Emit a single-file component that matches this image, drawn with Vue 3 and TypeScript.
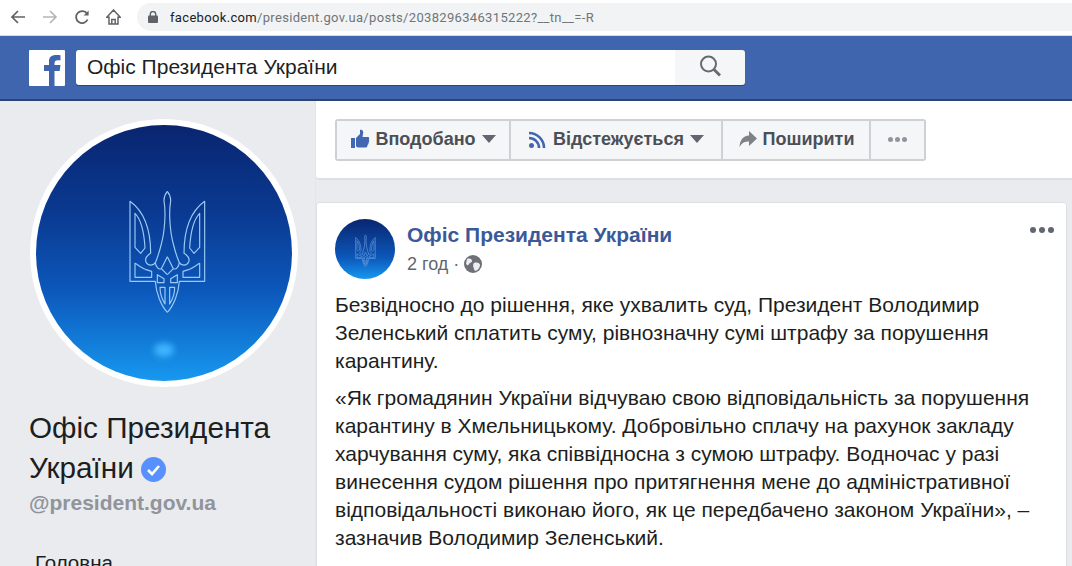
<script setup lang="ts">
const actions = [
  { label: 'Вподобано', icon: 'like', caret: true, w: 174 },
  { label: 'Відстежується', icon: 'rss', caret: true, w: 212 },
  { label: 'Поширити', icon: 'share', caret: false, w: 148 },
]
const sides = ['', 'translate(284 0) scale(-1 1)']
const tridentPaths = [
  // outer half: spear, stem, curl, wing, lower bar and half of the shield
  'M142 22C134 32 130 44 133 58C137 85 135 140 124 180C118 205 112 222 106 236C100 246 84 246 78 234C74 224 82 214 92 208C92 150 80 88 30 52V292H106C108 328 124 366 142 385',
  // blade
  'M45 88C62 105 72 140 75 192L62 208L45 190Z',
  // lower box
  'M45 238C56 244 66 252 76 256L95 262V280H45Z',
  // centre diamond
  'M142 218L124 254L142 272',
  // scroll under the diamond
  'M106 236C108 250 116 258 124 254',
  // small arch
  'M112 272L132 284V296H112Z',
  // shield cell
  'M120 310H135V360C126 346 120 328 120 310Z',
]
</script>

<template>
  <div class="page">
    <div class="chrome">
      <svg class="nav-ic" width="16" height="16" viewBox="0 0 16 16"><path d="M15 8H2M8 2 2 8l6 6" fill="none" stroke="#5f6368" stroke-width="1.7" /></svg>
      <svg class="nav-ic" width="16" height="16" viewBox="0 0 16 16"><path d="M1 8h13M8 2l6 6-6 6" fill="none" stroke="#b4b6b9" stroke-width="1.7" /></svg>
      <svg class="nav-ic" width="16" height="16" viewBox="0 0 16 16"><path d="M13.6 10.5A6 6 0 1 1 13 4.6" fill="none" stroke="#5f6368" stroke-width="1.8" /><path d="M14.6 1.5v5h-5z" fill="#5f6368" /></svg>
      <svg class="nav-ic" width="15" height="16" viewBox="0 0 15 16"><path d="M7.500 1 .8 8.200H3V15h9V8.200h2.200zM5.800 15v-4.500h3.400V15" fill="none" stroke="#5f6368" stroke-width="1.500" /></svg>
      <div class="url">
        <svg width="10" height="12" viewBox="0 0 10 12"><rect y="4.500" width="10" height="7.500" rx="1" fill="#5f6368" /><path d="M2.300 5V3.200a2.700 2.700 0 0 1 5.400 0V5" fill="none" stroke="#5f6368" stroke-width="1.400" /></svg>
        <span class="url-text"><b>facebook.com</b>/president.gov.ua/posts/2038296346315222?__tn__=-R</span>
      </div>
    </div>

    <header class="fb-bar">
      <div class="fb-logo"><svg width="36" height="36" viewBox="0 0 36 36"><rect width="36" height="36" rx="1" fill="#fff" /><path d="M20 36V21h-5v-6h5v-4C20 7 23 5 27 5c2 0 3.500.1 4.500.3v5h-3c-2 0-3 1-3 3V15h6l-.8 6h-5.200v15z" fill="#3f65ae" /></svg></div>
      <div class="search">
        <div class="search-input">Офіс Президента України</div>
        <button class="search-btn"><svg width="24" height="24" viewBox="0 0 24 24"><circle cx="10.500" cy="10" r="7.500" fill="none" stroke="#666a70" stroke-width="2" /><path d="m16 15.500 6 6" stroke="#666a70" stroke-width="2.800" /></svg></button>
      </div>
    </header>

    <div class="body">
      <aside class="side">
        <div class="avatar-ring">
          <div class="avatar">
            <svg class="trident" viewBox="0 0 285 405">
              <g v-for="t in sides" :key="t" :transform="t">
                <path v-for="d in tridentPaths" :key="d" :d="d" fill="none" stroke="#9ccaf5" stroke-width="3.500" stroke-linejoin="round" />
              </g>
            </svg>
            <span class="glow" />
          </div>
        </div>
        <h1 class="page-name">Офіс Президента України<svg class="badge" width="25" height="25" viewBox="0 0 25 25"><circle cx="12.500" cy="12.500" r="12.500" fill="#5890ff" /><path d="m7 13 4 4 7-8" fill="none" stroke="#fff" stroke-width="2.600" /></svg></h1>
        <div class="handle">@president.gov.ua</div>
        <div class="home">Головна</div>
      </aside>

      <main class="main">
        <section class="actions">
          <div class="btn-group">
            <button v-for="a in actions" :key="a.label" class="act" :style="{ width: a.w + 'px' }">
              <svg v-if="a.icon === 'like'" width="20" height="20" viewBox="0 0 20 20"><path d="M1 9h4v10H1zM6 9l4-4V1c2-1 4 1 3 4l-.5 3H18c1.500 0 1.500 2 .8 3 .8 1 .5 2-.3 2.500.3 1-.2 2-1 2.400.2 1.400-.7 2.600-2 2.600H9c-1.500 0-2-.5-3-1z" fill="#4267b2" /></svg>
              <svg v-else-if="a.icon === 'rss'" width="20" height="20" viewBox="0 0 20 20"><circle cx="3.500" cy="16.500" r="2.500" fill="#4267b2" /><path d="M1 9a10 10 0 0 1 10 10M1 4a15 15 0 0 1 15 15M1 0" fill="none" stroke="#4267b2" stroke-width="2.600" /></svg>
              <svg v-else width="20" height="20" viewBox="0 0 20 20"><path d="M11 2l8 7.500-8 7.500v-4.500c-4 0-7 1-9.500 5.500C2 11 5 7 11 6.500z" fill="#7f8186" /></svg>
              <span>{{ a.label }}</span>
              <i v-if="a.caret" class="caret" />
            </button>
            <button class="act more"><i /><i /><i /></button>
          </div>
        </section>

        <article class="card">
          <button class="card-more"><i /><i /><i /></button>
          <div class="post-head">
            <div class="mini-avatar">
              <svg class="mini-trident" viewBox="0 0 285 405">
                <g v-for="t in sides" :key="t" :transform="t">
                  <path v-for="d in tridentPaths" :key="d" :d="d" fill="none" stroke="#6f9fda" stroke-width="7" />
                </g>
              </svg>
            </div>
            <div class="post-meta">
              <a class="author">Офіс Президента України</a>
              <div class="time">2 год · <svg width="18" height="18" viewBox="0 0 18 18"><circle cx="9" cy="9" r="9" fill="#6d7076" /><path d="M3 4c3-1 5 0 5 2s-2 1-3 3-2 1-3 0zm7 4c3-1 6 0 6 2 0 3-3 6-5 6-1-2-3-6-1-8z" fill="#eceef0" /></svg></div>
            </div>
          </div>
          <p class="para first">Безвідносно до рішення, яке ухвалить суд, Президент Володимир Зеленський сплатить суму, рівнозначну сумі штрафу за порушення карантину.</p>
          <p class="para">«Як громадянин України відчуваю свою відповідальність за порушення карантину в Хмельницькому. Добровільно сплачу на рахунок закладу харчування суму, яка співвідносна з сумою штрафу. Водночас у разі винесення судом рішення про притягнення мене до адміністративної відповідальності виконаю його, як це передбачено законом України», – зазначив Володимир Зеленський.</p>
        </article>
      </main>
    </div>
  </div>
</template>

<style>
html, body { margin: 0; overflow: hidden; }
</style>

<style scoped>
.page { width: 1072px; height: 566px; overflow: hidden; background: #e9ebee; font-family: "Liberation Sans", Arial, sans-serif; color: #1c1e21; }
.chrome { height: 36px; box-sizing: border-box; background: #fff; display: flex; align-items: center; padding: 0 0 1px 10px; gap: 16px; border-bottom: 1px solid #d6dbe6; }
.nav-ic { flex: none; }
.url { flex: 1; height: 28px; border-radius: 14px 0 0 14px; background: #f1f3f4; display: flex; align-items: center; padding-left: 11px; gap: 12px; margin-left: 0; }
.url-text { font: 13px "Roboto", "Liberation Sans", sans-serif; color: #70757a; letter-spacing: .33px; }
.url-text b { font-weight: 400; color: #202124; }
.fb-bar { height: 65px; box-sizing: border-box; background: #3f65ae; border-bottom: 2px solid #2c4373; display: flex; align-items: flex-start; padding: 14px 0 0 29px; gap: 11px; }
.fb-logo { width: 36px; height: 36px; flex: none; }
.fb-logo svg, .search-btn svg { display: block; }
.search { width: 669px; height: 35px; display: flex; border-radius: 3px; overflow: hidden; box-shadow: 0 1px 0 #2c4373; }
.search-input { flex: 1; background: #fff; font-size: 21px; line-height: 34px; padding-left: 11px; color: #1d1f23; }
.search-btn { width: 70px; border: 0; background: #f5f6f7; display: flex; align-items: center; justify-content: center; padding: 0 0 4px 0; }
.body { display: flex; height: 465px; }
.side { width: 316px; flex: none; box-sizing: border-box; padding: 18px 0 0 29px; border-right: 1px solid #e3e5e9; }
.avatar-ring { width: 268px; height: 268px; margin-left: 1px; border-radius: 50%; background: #fff; display: flex; align-items: center; justify-content: center; }
.avatar { position: relative; width: 256px; height: 256px; border-radius: 50%; overflow: hidden; background: linear-gradient(#092570 0%, #0a3a92 35%, #0c58bb 65%, #1798ef 100%); }
.trident { position: absolute; left: 84px; top: 59px; width: 95px; height: 135px; }
.glow { position: absolute; left: 118px; top: 218px; width: 20px; height: 14px; border-radius: 50%; background: #3fb4ff; filter: blur(3px); }
.page-name { margin: 21px 0 0; width: 270px; font-size: 29.700px; line-height: 40px; font-weight: 400; color: #1c1e21; }
.badge { vertical-align: -4px; margin-left: 7px; }
.handle { font-size: 21px; font-weight: 700; color: #90949c; line-height: 24px; margin-top: 3px; }
.home { font-size: 20.500px; line-height: 22px; margin: 37px 0 0 6px; color: #1c1e21; }
.main { flex: 1; padding-left: 0; min-width: 0; }
.actions { height: 79px; background: #fff; box-sizing: border-box; padding: 18px 0 0 19px; border-bottom: 2px solid #dddfe2; border-radius: 0 0 0 4px; }
.btn-group { display: flex; width: 591px; height: 42px; border: 2px solid #ced0d4; border-radius: 3px; box-sizing: border-box; background: #f5f6f7; }
.act { height: 38px; border: 0; border-right: 2px solid #ced0d4; background: #f5f6f7; display: flex; align-items: center; justify-content: center; gap: 5px; font: 700 18px "Liberation Sans", Arial, sans-serif; color: #4b4f56; padding: 0 0 2px; flex: none; }
.caret { width: 0; height: 0; border: 7px solid transparent; border-top: 8px solid #606770; border-bottom: 0; margin-left: 1px; }
.act.more { flex: 1; border-right: 0; gap: 2px; }
.act.more i { width: 5px; height: 5px; border-radius: 50%; background: #90949c; }
.card { position: relative; margin: 22px 5px 0 0; background: #fff; border: 1px solid #dddfe2; border-radius: 3px; padding: 16px 18px 0 18px; height: 400px; box-sizing: border-box; }
.card-more { position: absolute; top: 24px; right: 12px; border: 0; background: none; padding: 0; display: flex; gap: 3px; }
.card-more i { width: 6px; height: 6px; border-radius: 50%; background: #606770; }
.post-head { display: flex; gap: 12px; }
.mini-avatar { position: relative; width: 60px; height: 60px; border-radius: 50%; background: linear-gradient(#092570 0%, #0c58bb 65%, #1798ef 100%); }
.mini-trident { position: absolute; left: 17.500px; top: 14px; width: 25px; height: 35.500px; }
.author { display: block; font-size: 21px; font-weight: 700; color: #3b5998; line-height: 24px; margin-top: 4px; }
.time { font-size: 18px; color: #616770; line-height: 22px; margin-top: 6px; display: flex; align-items: center; gap: 5px; }
.para { margin: 9px 0 0; font-size: 21px; line-height: 28px; color: #1c1e21; }
.para.first { margin-top: 12px; }
</style>
